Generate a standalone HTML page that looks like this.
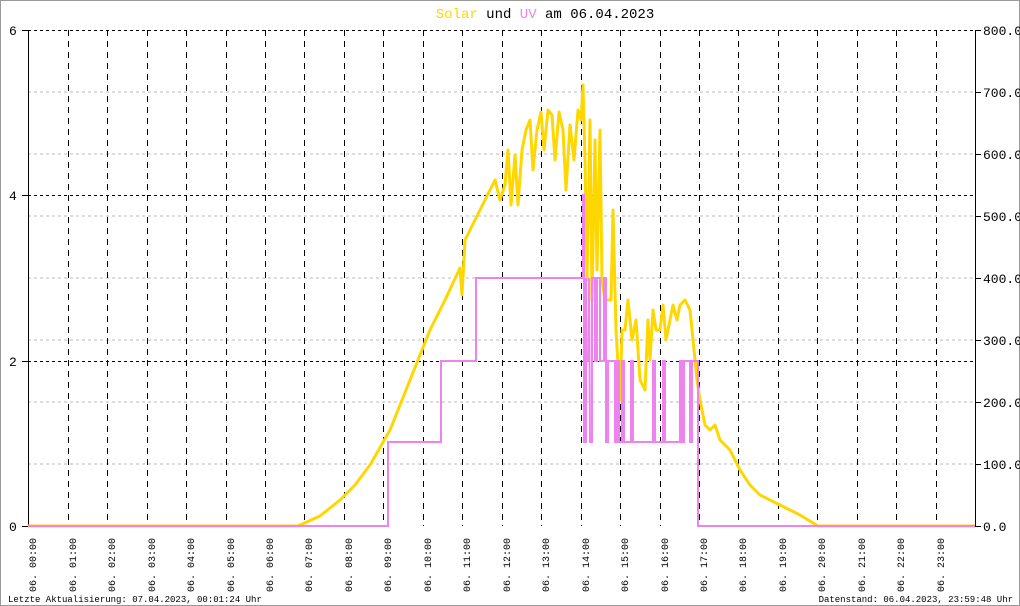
<!DOCTYPE html>
<html><head><meta charset="utf-8"><style>
html,body{margin:0;padding:0;background:#fff}
svg{display:block}
text{font-family:"Liberation Mono","DejaVu Sans Mono",monospace}
</style></head><body>
<svg width="1020" height="606" viewBox="0 0 1020 606" xmlns="http://www.w3.org/2000/svg">
<rect x="0.5" y="0.5" width="1019" height="605" fill="#fff" stroke="#999"/>
<text x="545" y="18" font-size="14" text-anchor="middle"><tspan fill="#ffd700">Solar</tspan> und <tspan fill="#ee82ee">UV</tspan> am 06.04.2023</text>
<g stroke="#bbb" stroke-dasharray="3,3" stroke-width="1">
<path d="M28 92H975M28 154H975M28 216H975M28 278H975M28 340H975M28 402H975M28 464H975"/>
</g>
<g stroke="#000" stroke-dasharray="3,3" stroke-width="1">
<path d="M28 30.5H975M28 195.5H975M28 361.5H975"/>
<path id="v" d="M68.5 30V526M107.5 30V526M147.5 30V526M186.5 30V526M226.5 30V526M265.5 30V526M304.5 30V526M344.5 30V526M383.5 30V526M423.5 30V526M462.5 30V526M502.5 30V526M541.5 30V526M581.5 30V526M620.5 30V526M660.5 30V526M699.5 30V526M738.5 30V526M778.5 30V526M817.5 30V526M857.5 30V526M896.5 30V526M936.5 30V526" stroke-dasharray="6,5"/>
</g>
<g stroke="#000" stroke-width="1">
<path d="M28.5 30V527M975.5 30V527M22 30.5H28M22 195.5H28M22 361.5H28M22 526.5H28M975 30.5H981M975 92.5H981M975 154.5H981M975 216.5H981M975 278.5H981M975 340.5H981M975 402.5H981M975 464.5H981M975 526.5H981"/>
</g>
<g font-size="13" fill="#000">
<text x="9" y="35">6</text><text x="9" y="200">4</text><text x="9" y="366">2</text><text x="9" y="531">0</text>
</g>
<g font-size="13" fill="#000">
<text x="983" y="35">800.0</text><text x="983" y="97">700.0</text><text x="983" y="159">600.0</text><text x="983" y="221">500.0</text><text x="983" y="283">400.0</text><text x="983" y="345">300.0</text><text x="983" y="407">200.0</text><text x="983" y="469">100.0</text><text x="983" y="531">0.0</text>
</g>
<polyline fill="none" stroke="#ffd700" stroke-width="3" stroke-linejoin="round" points="28,526 298,526 320,516 340,500 355,485 370,465 390,430 410,380 430,330 445,300 460,268 462,295 465,240 480,210 490,190 495,180 500,200 505,185 508,150 511,205 515,155 518,205 522,150 526,130 530,120 533,170 537,130 541,112 544,150 548,110 552,115 555,160 559,112 563,130 566,190 570,125 574,160 578,110 581,120 583,85 585,160 587,280 590,120 592,300 595,140 597,270 600,130 602,280 605,300 608,300 611,300 613,210 616,330 620,400 622,330 625,330 628,300 632,340 636,320 640,380 645,390 648,320 650,360 653,310 656,330 660,330 663,305 666,340 670,320 673,305 677,320 680,305 685,300 690,310 693,340 697,380 700,400 705,425 710,430 715,425 720,440 730,450 740,470 750,485 760,495 780,505 800,515 818,526 975,526"/>
<polyline fill="none" stroke="#ee82ee" stroke-width="2" points="28,526 388,526 388,442 441,442 441,361 476,361 476,278 583,278 583,195 584,195 584,442 586,442 586,278 587,361 589,361 589,278 590,442 592,442 592,278 595,278 595,361 597,361 597,278 600,278 600,361 604,361 604,278 606,278 606,442 608,442 608,361 615,361 615,442 617,442 617,361 619,361 619,442 622,442 622,361 624,361 624,442 631,442 631,361 633,361 633,442 653,442 653,361 655,361 655,442 663,442 663,361 665,361 665,442 680,442 680,361 682,361 682,442 684,442 684,361 690,361 690,442 692,442 692,361 698,361 698,526 975,526"/>
<g font-size="10" fill="#000">
<text transform="translate(36,592) rotate(-90)">06. 00:00</text>
<text transform="translate(76,592) rotate(-90)">06. 01:00</text>
<text transform="translate(115,592) rotate(-90)">06. 02:00</text>
<text transform="translate(155,592) rotate(-90)">06. 03:00</text>
<text transform="translate(194,592) rotate(-90)">06. 04:00</text>
<text transform="translate(234,592) rotate(-90)">06. 05:00</text>
<text transform="translate(273,592) rotate(-90)">06. 06:00</text>
<text transform="translate(312,592) rotate(-90)">06. 07:00</text>
<text transform="translate(352,592) rotate(-90)">06. 08:00</text>
<text transform="translate(391,592) rotate(-90)">06. 09:00</text>
<text transform="translate(431,592) rotate(-90)">06. 10:00</text>
<text transform="translate(470,592) rotate(-90)">06. 11:00</text>
<text transform="translate(510,592) rotate(-90)">06. 12:00</text>
<text transform="translate(549,592) rotate(-90)">06. 13:00</text>
<text transform="translate(589,592) rotate(-90)">06. 14:00</text>
<text transform="translate(628,592) rotate(-90)">06. 15:00</text>
<text transform="translate(668,592) rotate(-90)">06. 16:00</text>
<text transform="translate(707,592) rotate(-90)">06. 17:00</text>
<text transform="translate(746,592) rotate(-90)">06. 18:00</text>
<text transform="translate(786,592) rotate(-90)">06. 19:00</text>
<text transform="translate(825,592) rotate(-90)">06. 20:00</text>
<text transform="translate(865,592) rotate(-90)">06. 21:00</text>
<text transform="translate(904,592) rotate(-90)">06. 22:00</text>
<text transform="translate(944,592) rotate(-90)">06. 23:00</text>
</g>
<g font-size="9" fill="#000">
<text x="8" y="602">Letzte Aktualisierung: 07.04.2023, 00:01:24 Uhr</text>
<text x="1013" y="602" text-anchor="end">Datenstand: 06.04.2023, 23:59:48 Uhr</text>
</g>
</svg>
</body></html>
